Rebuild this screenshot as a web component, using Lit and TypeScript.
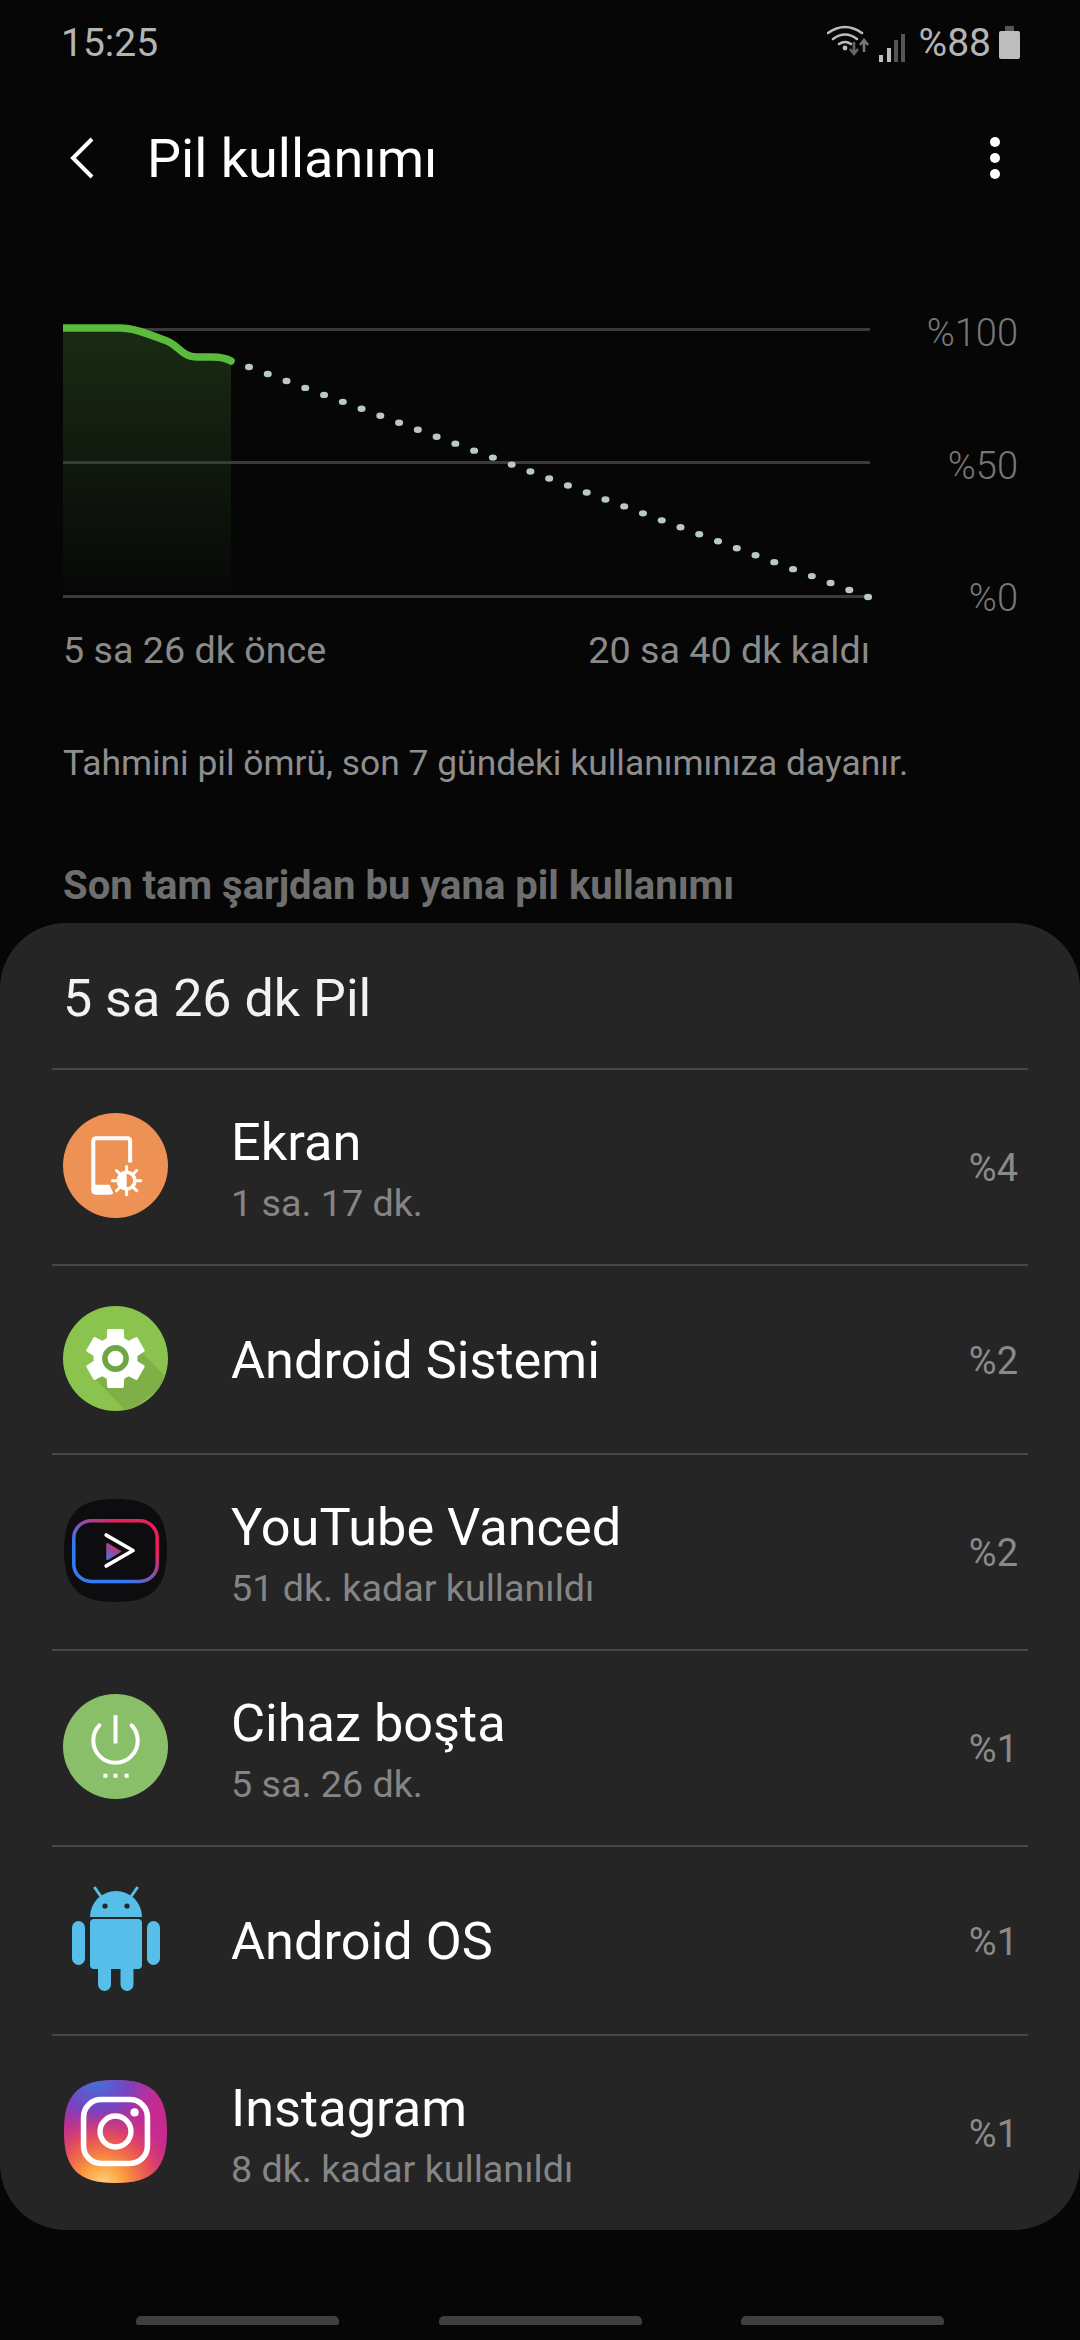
import { LitElement, css, html, svg } from "lit";
import { customElement } from "lit/decorators.js";

type Usage = { name: string; detail?: string; percent: string; icon: string };

const usages: Usage[] = [
  { name: "Ekran", detail: "1 sa. 17 dk.", percent: "%4", icon: "screen" },
  { name: "Android Sistemi", percent: "%2", icon: "system" },
  { name: "YouTube Vanced", detail: "51 dk. kadar kullanıldı", percent: "%2", icon: "vanced" },
  { name: "Cihaz boşta", detail: "5 sa. 26 dk.", percent: "%1", icon: "idle" },
  { name: "Android OS", percent: "%1", icon: "android" },
  { name: "Instagram", detail: "8 dk. kadar kullanıldı", percent: "%1", icon: "instagram" },
];

// projected drain, one dot every 18.75px
const dots = Array.from({ length: 34 }, (_, i) => [249 + i * 18.76, 67 + i * 6.97]);

const squircle = "M50 0C86 0 100 14 100 50S86 100 50 100S0 86 0 50S14 0 50 0Z";

const gearPoints = () => {
  const pts: string[] = [];
  for (let i = 0; i < 6; i++) {
    const a = (i * Math.PI) / 3 - Math.PI / 2;
    const at = (r: number, d: number) =>
      `${(50 + r * Math.cos(a + d)).toFixed(1)},${(50 + r * Math.sin(a + d)).toFixed(1)}`;
    pts.push(at(28.5, -0.24), at(28.5, 0.24), at(20.5, 0.36), at(20.5, 0.69));
  }
  return pts.join(" ");
};

const icons: Record<string, unknown> = {
  screen: svg`<svg viewBox="0 0 104 104" class="icon">
    <circle cx="52" cy="52" r="52" fill="#ee9154"/>
    <path d="M66.5 49V28q0-3-3-3H33q-3 0-3 3V76q0 3 3 3H48" fill="none" stroke="#fff" stroke-width="4"/>
    <path d="M31 71H46L50 80H31Z" fill="#fff"/>
    <g stroke="#fff" stroke-width="3" stroke-linecap="round">
      <path d="M63 53V81M49 67H77M53 57L73 77M73 57L53 77"/>
    </g>
    <circle cx="63" cy="67" r="10" fill="#fff"/>
    <path d="M63 60.5a6.5 6.5 0 0 1 0 13Z" fill="#ee9154"/>
  </svg>`,
  system: svg`<svg viewBox="0 0 104 104" class="icon">
    <defs><clipPath id="sys"><circle cx="52" cy="52" r="52"/></clipPath></defs>
    <circle cx="52" cy="52" r="52" fill="#8bc34f"/>
    <path d="M30 70L64 106L106 74L76 44Z" fill="#7fb047" clip-path="url(#sys)"/>
    <polygon points=${gearPoints()} transform="translate(2 2)" fill="#fff" stroke="#fff" stroke-width="3" stroke-linejoin="round"/>
    <circle cx="52" cy="52" r="10.5" fill="none" stroke="#6ea644" stroke-width="5.5"/>
  </svg>`,
  vanced: svg`<svg viewBox="0 0 100 100" class="icon squircle">
    <defs>
      <linearGradient id="frame" x1="0" y1="1" x2="1" y2="0">
        <stop offset="0.3" stop-color="#2f7cf6"/>
        <stop offset="0.75" stop-color="#e8205a"/>
      </linearGradient>
      <linearGradient id="tri" x1="0" y1="1" x2="0.6" y2="0">
        <stop offset="0" stop-color="#3f78e8"/>
        <stop offset="1" stop-color="#d8265e"/>
      </linearGradient>
    </defs>
    <path d=${squircle} fill="#0d0d10"/>
    <rect x="9.5" y="21" width="81" height="59" rx="17" fill="none" stroke="url(#frame)" stroke-width="3.4"/>
    <path d="M41 35L67 50L41 65" fill="none" stroke="#fff" stroke-width="3.6" stroke-linecap="round" stroke-linejoin="round"/>
    <path d="M41 44Q41 42 43 43L56 51L43 59Q41 60 41 58Z" fill="url(#tri)"/>
  </svg>`,
  idle: svg`<svg viewBox="0 0 104 104" class="icon">
    <circle cx="52" cy="52" r="52" fill="#8abf69"/>
    <path d="M36 31A22 22 0 1 0 68 31" fill="none" stroke="#fff" stroke-width="4" stroke-linecap="round"/>
    <path d="M52 21V49" stroke="#fff" stroke-width="4"/>
    <path d="M40 79h4v4h-4zM50 79h4v4h-4zM61 79h4v4h-4z" fill="#fff"/>
  </svg>`,
  android: svg`<svg viewBox="0 0 88 106" class="icon bot">
    <g fill="#56bee8">
      <path d="M18 31a26 26 0 0 1 52 0Z"/>
      <rect x="18" y="33" width="52" height="50" rx="4"/>
      <rect x="0" y="35" width="13" height="44" rx="6.5"/>
      <rect x="75" y="35" width="13" height="44" rx="6.5"/>
      <rect x="26" y="70" width="13" height="35" rx="6.5"/>
      <rect x="48.5" y="70" width="13" height="35" rx="6.5"/>
    </g>
    <path d="M30 12L23 2M58 12L65 2" stroke="#56bee8" stroke-width="3" stroke-linecap="round"/>
    <circle cx="33" cy="20" r="2.6" fill="#252525"/>
    <circle cx="55" cy="20" r="2.6" fill="#252525"/>
  </svg>`,
  instagram: svg`<svg viewBox="0 0 100 100" class="icon squircle">
    <defs>
      <clipPath id="ig"><path d=${squircle}/></clipPath>
      <radialGradient id="igWarm" cx="0.38" cy="1.02" r="0.75">
        <stop offset="0" stop-color="#fdd77e"/>
        <stop offset="0.3" stop-color="#fb9a3c"/>
        <stop offset="0.62" stop-color="#ee5b4a" stop-opacity="0.8"/>
        <stop offset="1" stop-color="#d42f7e" stop-opacity="0"/>
      </radialGradient>
      <radialGradient id="igCool" cx="0.3" cy="-0.02" r="0.68">
        <stop offset="0" stop-color="#3e76dc"/>
        <stop offset="0.5" stop-color="#7a41c0"/>
        <stop offset="1" stop-color="#b5329c" stop-opacity="0"/>
      </radialGradient>
    </defs>
    <g clip-path="url(#ig)">
      <rect width="100" height="100" fill="#c52b8f"/>
      <rect width="100" height="100" fill="url(#igCool)"/>
      <rect width="100" height="100" fill="url(#igWarm)"/>
    </g>
    <rect x="19" y="19" width="62" height="62" rx="17" fill="none" stroke="#fff" stroke-width="5.4"/>
    <circle cx="50" cy="50" r="15" fill="none" stroke="#fff" stroke-width="5.2"/>
    <circle cx="68.5" cy="31.5" r="4" fill="#fff"/>
  </svg>`,
};

@customElement("app-root")
export class AppRoot extends LitElement {
  private renderStatus() {
    return html`
      <div class="status">
        <span>15:25</span>
        <div class="status-right">
          <svg class="wifi" width="46" height="34" viewBox="0 0 46 34" fill="none">
            <g stroke="#bdbdbd" stroke-width="2.6" stroke-linecap="round">
              <path d="M1 9Q18 -3 35 9"/>
              <path d="M6 15Q18 6 30 15"/>
              <path d="M12 20Q18 16 24 20"/>
            </g>
            <circle cx="18" cy="24" r="2.4" fill="#bdbdbd"/>
            <path d="M27 18V29M23 25L27 30L31 25" stroke="#666" stroke-width="2.6"/>
            <path d="M37 28V17M33 21L37 16L41 21" stroke="#777" stroke-width="2.6"/>
          </svg>
          <svg class="signal" width="26" height="30" viewBox="0 0 26 30">
            <rect x="0" y="22" width="4" height="7" fill="#bdbdbd"/>
            <rect x="8" y="15" width="4" height="14" fill="#bdbdbd"/>
            <rect x="15" y="7" width="4" height="22" fill="#555"/>
            <rect x="22" y="1" width="4" height="28" fill="#555"/>
          </svg>
          <span class="level">%88</span>
          <svg class="battery" width="21" height="33" viewBox="0 0 21 33">
            <rect x="6" y="0" width="9" height="7" fill="#555"/>
            <rect x="0" y="5" width="21" height="28" rx="2" fill="#bdbdbd"/>
          </svg>
        </div>
      </div>
    `;
  }

  private renderChart() {
    return html`
      <svg class="chart" width="1080" height="320" viewBox="0 0 1080 320">
        <defs>
          <linearGradient id="drain" x1="0" y1="0" x2="0" y2="1">
            <stop offset="0" stop-color="#1a2b14"/>
            <stop offset="1" stop-color="#070807"/>
          </linearGradient>
        </defs>
        <path d="M63 28H120C135 28 150 35 167 41C178 45 182 57 197 57H212C222 57 226 58 231 61V292H63Z" fill="url(#drain)"/>
        <g fill="#3a3a3a">
          <rect x="63" y="28" width="807" height="3"/>
          <rect x="63" y="161" width="807" height="3"/>
          <rect x="63" y="295" width="807" height="3"/>
        </g>
        <path d="M63 28H120C135 28 150 35 167 41C178 45 182 57 197 57H212C222 57 226 58 231 61" fill="none" stroke="#5abb3c" stroke-width="7.5" stroke-linecap="round"/>
        <rect x="59" y="23" width="4" height="10" fill="#060606"/>
        ${dots.map(([x, y]) => svg`<ellipse cx=${x} cy=${y} rx="4" ry="3.2" fill="#b9c8cd"/>`)}
        <text class="axis" x="1018" y="46">%100</text>
        <text class="axis" x="1018" y="179">%50</text>
        <text class="axis" x="1018" y="311">%0</text>
      </svg>
    `;
  }

  private renderRow(u: Usage) {
    return html`
      <div class="row ${u.detail ? "two" : "one"}">
        <div class="icon-box">${icons[u.icon]}</div>
        <div class="labels">
          <div class="name">${u.name}</div>
          ${u.detail ? html`<div class="detail">${u.detail}</div>` : ""}
        </div>
        <div class="percent">${u.percent}</div>
      </div>
    `;
  }

  render() {
    return html`
      ${this.renderStatus()}
      <div class="appbar">
        <svg width="24" height="42" viewBox="0 0 24 42" fill="none" class="back">
          <path d="M22 2L3 21L22 40" stroke="#fff" stroke-width="4"/>
        </svg>
        <h1>Pil kullanımı</h1>
        <div class="more"><i></i><i></i><i></i></div>
      </div>
      ${this.renderChart()}
      <div class="times"><span>5 sa 26 dk önce</span><span>20 sa 40 dk kaldı</span></div>
      <p class="note">Tahmini pil ömrü, son 7 gündeki kullanımınıza dayanır.</p>
      <h2>Son tam şarjdan bu yana pil kullanımı</h2>
      <section class="sheet">
        <div class="sheet-title">5 sa 26 dk Pil</div>
        ${usages.map((u) => this.renderRow(u))}
      </section>
      <div class="nav"><i></i><i></i><i></i></div>
    `;
  }

  static styles = css`
    :host {
      display: block;
      width: 1080px;
      height: 2340px;
      overflow: hidden;
      background: #060606;
      font-family: Roboto, "Noto Sans", sans-serif;
    }

    .status {
      height: 86px;
      padding: 0 60px 0 61px;
      display: flex;
      align-items: center;
      justify-content: space-between;
      color: #b4b4b4;
      font-size: 39px;
    }

    .status-right {
      display: flex;
      align-items: center;
    }

    .wifi {
      margin-top: -4px;
    }

    .signal {
      margin: 10px 0 0 6px;
    }

    .level {
      margin: 0 8px 0 14px;
    }

    .battery {
      margin-top: -1px;
    }

    .appbar {
      height: 144px;
      padding: 0 80px 0 70px;
      display: flex;
      align-items: center;
    }

    .back {
      flex: none;
    }

    h1 {
      flex: 1;
      margin: 0 0 0 53px;
      color: #fff;
      font-size: 54px;
      font-weight: 400;
    }

    .more {
      display: flex;
      flex-direction: column;
      gap: 6px;
    }

    .more i {
      width: 10px;
      height: 10px;
      border-radius: 50%;
      background: #fff;
    }

    .chart {
      display: block;
      margin-top: 70px;
    }

    .axis {
      fill: #777;
      font-size: 38px;
      font-weight: 300;
      text-anchor: end;
    }

    .times {
      width: 807px;
      height: 60px;
      margin-left: 63px;
      display: flex;
      align-items: center;
      justify-content: space-between;
      color: #8a8a8a;
      font-size: 37.7px;
    }

    .note {
      margin: 58px 0 0 63px;
      color: #8e8e8e;
      font-size: 35.4px;
      line-height: 50px;
    }

    h2 {
      margin: 73px 0 12px 63px;
      color: #6e6e6e;
      font-size: 40px;
      line-height: 50px;
      font-weight: 700;
    }

    .sheet {
      height: 1307px;
      box-sizing: border-box;
      border-radius: 66px;
      background: #252525;
    }

    .sheet-title {
      height: 145px;
      box-sizing: border-box;
      padding: 5px 0 0 63px;
      display: flex;
      align-items: center;
      color: #f2f2f2;
      font-size: 52px;
    }

    .row {
      margin: 0 52px;
      padding: 0 10px 0 11px;
      box-sizing: border-box;
      border-top: 2px solid #474747;
      display: flex;
      align-items: center;
    }

    .row.two {
      height: 196px;
    }

    .row.one {
      height: 189px;
    }

    .icon-box {
      flex: none;
      width: 105px;
      margin: 0 63px 3px 0;
      display: flex;
      justify-content: center;
    }

    .icon {
      display: block;
      width: 105px;
      height: 105px;
    }

    .icon.squircle {
      width: 103px;
      height: 103px;
    }

    .icon.bot {
      width: 88px;
      height: 106px;
    }

    .labels {
      flex: 1;
    }

    .two .labels {
      padding-top: 6px;
    }

    .name {
      color: #fff;
      font-size: 52.3px;
      line-height: 66px;
    }

    .detail {
      color: #858585;
      font-size: 37.7px;
      line-height: 56px;
    }

    .percent {
      padding-top: 2px;
      color: #8a8a8a;
      font-size: 38px;
    }

    .nav {
      margin-top: 86px;
      padding: 0 136px;
      display: flex;
      justify-content: space-between;
    }

    .nav i {
      width: 203px;
      height: 9px;
      border-radius: 5px 5px 2px 2px;
      background: #3f3f3f;
    }
  `;
}
